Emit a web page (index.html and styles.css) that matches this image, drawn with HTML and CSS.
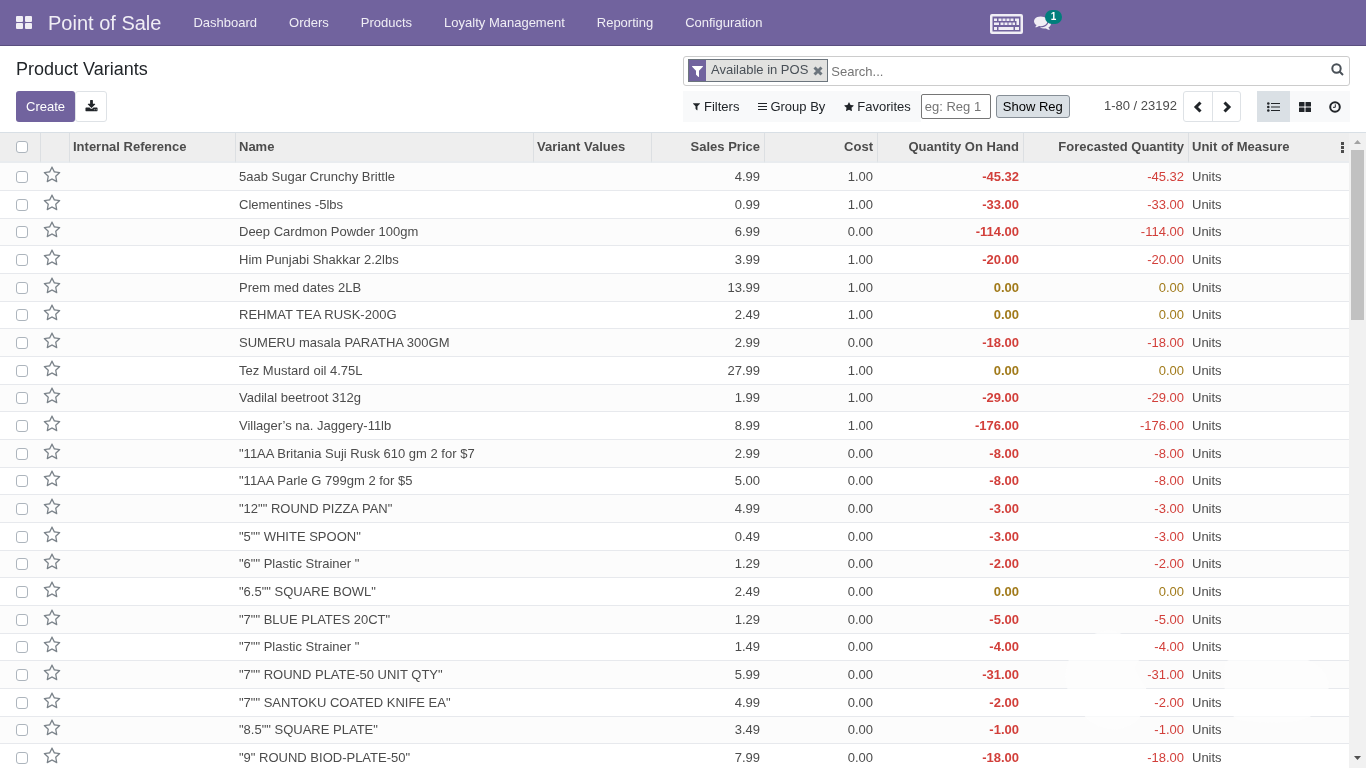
FILE: index.html
```html
<!DOCTYPE html>
<html lang="en">
<head>
    <meta charset="UTF-8">
    <meta name="viewport" content="width=device-width, initial-scale=1.0">
    <title>Product Variants</title>
    <link rel="stylesheet" href="styles.css">
</head>
<body>
    <svg class="sprite" aria-hidden="true">
        <symbol id="star-o" viewBox="0 0 1792 1792"><path d="M1201 1004l306-297-422-62-189-382-189 382-422 62 306 297-73 421 378-199 377 199zm527-357q0 22-26 48l-363 354 86 500q1 7 1 20 0 50-41 50-19 0-40-12l-449-236-449 236q-22 12-40 12-21 0-31.500-14.500t-10.500-35.500q0-6 2-20l86-500-364-354q-25-27-25-48 0-37 56-46l502-73 225-455q19-41 49-41t49 41l225 455 502 73q56 9 56 46z"/></symbol>
        <symbol id="filter" viewBox="0 0 1792 1792"><path d="M1595 295q17 41-14 70l-493 493v742q0 42-39 59-13 5-25 5-27 0-45-19l-256-256q-19-19-19-45v-486l-493-493q-31-29-14-70 17-39 59-39h1280q42 0 59 39z"/></symbol>
    </svg>

    <header class="navbar">
        <button class="apps" aria-label="Apps">
            <svg width="16" height="13" viewBox="0 0 16 13"><rect width="7" height="6" rx="1"/><rect x="9" width="7" height="6" rx="1"/><rect y="7" width="7" height="6" rx="1"/><rect x="9" y="7" width="7" height="6" rx="1"/></svg>
        </button>
        <a href="#" class="brand">Point of Sale</a>
        <nav class="menu">
            <a href="#">Dashboard</a>
            <a href="#">Orders</a>
            <a href="#">Products</a>
            <a href="#">Loyalty Management</a>
            <a href="#">Reporting</a>
            <a href="#">Configuration</a>
        </nav>
        <div class="systray">
            <button aria-label="Keyboard">
                <svg width="33" height="20" viewBox="0 0 33 20"><path fill-rule="evenodd" d="M2 0h29a2 2 0 0 1 2 2v16a2 2 0 0 1-2 2H2a2 2 0 0 1-2-2V2a2 2 0 0 1 2-2zM2.500 2.500v15h28v-15z"/><path d="M4 4.500h3v2.500H4zM8.500 4.500h3v2.500h-3zM12.500 4.500h3v2.500h-3zM16.500 4.500h3v2.500h-3zM20.500 4.500h3v2.500h-3zM25 4.500h4v2.500h-4zM4 8.500h5v2.500H4zM10.500 8.500h3v2.500h-3zM14.500 8.500h3v2.500h-3zM18.500 8.500h3v2.500h-3zM22.500 8.500h2.500v2.500h-2.500zM26.500 6.500h2.500v4.500h-2.500zM4 13h3v3H4zM8.500 13h15v3h-15zM25 13h4v3h-4z"/></svg>
            </button>
            <button class="messages" aria-label="Messages">
                <svg width="17" height="17" viewBox="0 0 1792 1792"><path d="M1408 768q0 139-94 257t-256.500 186.500-353.500 68.500q-86 0-176-16-124 88-278 128-36 9-86 16h-3q-11 0-20.500-8t-11.500-21q-1-3-1-6.500t.5-6.500 2-6l2.500-5 3.500-5.500 4-5 4.500-5 4-4.500q5-6 23-25t26-29.500 22.500-29 25-38.500 20.500-44q-124-72-195-177t-71-224q0-139 94-257t256.500-186.500 353.500-68.500 353.500 68.500 256.500 186.500 94 257zm384 256q0 120-71 224.500t-195 176.500q10 24 20.500 44t25 38.500 22.500 29 26 29.500 23 25q1 1 4 4.500t4.500 5 4 5 3.500 5.500l2.500 5 2 6 .5 6.500-1 6.500q-3 14-13 22t-22 7q-50-7-86-16-154-40-278-128-90 16-176 16-271 0-472-132 58 4 88 4 161 0 309-45t264-129q125-92 192-212t67-254q0-77-23-152 129 71 204 178t75 230z"/></svg>
                <span class="badge">1</span>
            </button>
        </div>
    </header>

    <section class="control-panel">
        <div class="panel-left">
            <h1>Product Variants</h1>
            <div class="actions">
                <button class="btn-create">Create</button>
                <button class="btn-export" aria-label="Export">
                    <svg width="13" height="13" viewBox="0 0 1792 1792"><path d="M1344 1344q0-26-19-45t-45-19-45 19-19 45 19 45 45 19 45-19 19-45zm256 0q0-26-19-45t-45-19-45 19-19 45 19 45 45 19 45-19 19-45zm128-224v320q0 40-28 68t-68 28h-1472q-40 0-68-28t-28-68v-320q0-40 28-68t68-28h465l135 136q58 56 136 56t136-56l136-136h464q40 0 68 28t28 68zm-325-569q17 41-14 70l-448 448q-18 19-45 19t-45-19l-448-448q-31-29-14-70 17-39 59-39h256v-448q0-26 19-45t45-19h256q26 0 45 19t19 45v448h256q42 0 59 39z"/></svg>
                </button>
            </div>
        </div>
        <div class="panel-right">
            <div class="searchbar">
                <div class="facet">
                    <span class="facet-icon"><svg width="15" height="14"><use href="#filter"/></svg></span>
                    <span class="facet-label">Available in POS</span>
                    <button class="facet-remove" aria-label="Remove">
                        <svg width="10" height="10" viewBox="0 0 10 10"><path d="M1.500 1.500l7 7M8.500 1.500l-7 7"/></svg>
                    </button>
                </div>
                <input type="text" class="search-input" placeholder="Search..." aria-label="Search">
                <button class="search-btn" aria-label="Search">
                    <svg width="13" height="13" viewBox="0 0 13 13"><circle cx="5.500" cy="5.500" r="4.200"/><path d="M8.500 8.500l3.500 3.500"/></svg>
                </button>
            </div>
            <div class="search-options">
                <div class="dropdowns">
                    <button><svg width="9" height="9"><use href="#filter"/></svg>Filters</button>
                    <button><svg width="9" height="9" viewBox="0 0 9 9"><path d="M0 1h9v1H0zM0 4h9v1H0zM0 7h9v1H0z"/></svg>Group By</button>
                    <button><svg width="10" height="10" viewBox="0 0 1792 1792"><path d="M1728 647q0 22-26 48l-363 354 86 500q1 7 1 20 0 21-10.500 35.500t-30.500 14.500q-19 0-40-12l-449-236-449 236q-22 12-40 12-21 0-31.500-14.500t-10.500-35.500q0-6 2-20l86-500-364-354q-25-27-25-48 0-37 56-46l502-73 225-455q19-41 49-41t49 41l225 455 502 73q56 9 56 46z"/></svg>Favorites</button>
                </div>
                <input type="text" class="reg-input" placeholder="eg: Reg 1" aria-label="Register">
                <button class="reg-btn">Show Reg</button>
                <span class="pager-count">1-80 / 23192</span>
                <div class="pager">
                    <button aria-label="Previous"><svg width="12" height="12" viewBox="0 0 12 12"><path d="M8.500 1.500L4 6l4.500 4.500"/></svg></button>
                    <button aria-label="Next"><svg width="12" height="12" viewBox="0 0 12 12"><path d="M3.500 1.500L8 6l-4.500 4.500"/></svg></button>
                </div>
                <div class="views">
                    <button class="active" aria-label="List view"><svg width="13" height="10" viewBox="0 0 13 10"><circle cx="1.300" cy="1.500" r="1.300"/><circle cx="1.300" cy="5" r="1.300"/><circle cx="1.300" cy="8.500" r="1.300"/><path d="M4 1h9v1H4zM4 4.500h9v1H4zM4 8h9v1H4z"/></svg></button>
                    <button aria-label="Kanban view"><svg width="12" height="10" viewBox="0 0 12 10"><rect width="5.500" height="4.500" rx=".5"/><rect x="6.500" width="5.500" height="4.500" rx=".5"/><rect y="5.500" width="5.500" height="4.500" rx=".5"/><rect x="6.500" y="5.500" width="5.500" height="4.500" rx=".5"/></svg></button>
                    <button aria-label="Activity view"><svg class="clock" width="12" height="12" viewBox="0 0 12 12"><circle cx="6" cy="6" r="4.800"/><path d="M6.300 3.300v3H4"/></svg></button>
                </div>
            </div>
        </div>
    </section>

    <main class="content">
        <div class="list">
            <table>
                <colgroup>
                    <col class="col-check">
                    <col class="col-star">
                    <col class="col-ref">
                    <col>
                    <col class="col-variant">
                    <col class="col-price">
                    <col class="col-price">
                    <col class="col-onhand">
                    <col class="col-forecast">
                    <col class="col-unit">
                </colgroup>
                <thead>
                    <tr>
                        <th class="check"><input type="checkbox" aria-label="Select all"></th>
                        <th></th>
                        <th>Internal Reference</th>
                        <th>Name</th>
                        <th>Variant Values</th>
                        <th class="num">Sales Price</th>
                        <th class="num">Cost</th>
                        <th class="num">Quantity On Hand</th>
                        <th class="num">Forecasted Quantity</th>
                        <th>
                            <div class="last-head">
                                Unit of Measure
                                <button aria-label="Optional columns"><svg width="3" height="11" viewBox="0 0 3 11"><path d="M0 0h3v3H0zM0 4h3v3H0zM0 8h3v3H0z"/></svg></button>
                            </div>
                        </th>
                    </tr>
                </thead>
                <tbody id="rows"></tbody>
            </table>
            <!-- faint white shapes over the last rows -->
            <svg class="shapes" width="266" height="100" viewBox="0 0 266 100" aria-hidden="true"><path d="M44 0Q64 2 76 26L70 38Q76 50 82 60Q82 96 50 100Q24 98 16 80Q0 62 0 46Q4 6 44 0z"/><path d="M160 32Q184 18 208 24Q262 26 264 56Q260 88 228 92Q196 94 172 90Q156 76 160 32z"/></svg>
        </div>
        <div class="scrollbar" aria-hidden="true">
            <svg width="9" height="5" viewBox="0 0 9 5"><path d="M4.500 0L8 4H1z"/></svg>
            <div class="thumb"></div>
            <svg class="down" width="9" height="5" viewBox="0 0 9 5"><path d="M1 0h7L4.500 4z"/></svg>
        </div>
    </main>

    <script>
        // name, sales price, cost, quantity
        const products = [
            ['5aab Sugar Crunchy Brittle', '4.99', '1.00', '-45.32'],
            ['Clementines -5lbs', '0.99', '1.00', '-33.00'],
            ['Deep Cardmon Powder 100gm', '6.99', '0.00', '-114.00'],
            ['Him Punjabi Shakkar 2.2lbs', '3.99', '1.00', '-20.00'],
            ['Prem med dates 2LB', '13.99', '1.00', '0.00'],
            ['REHMAT TEA RUSK-200G', '2.49', '1.00', '0.00'],
            ['SUMERU masala PARATHA 300GM', '2.99', '0.00', '-18.00'],
            ['Tez Mustard oil 4.75L', '27.99', '1.00', '0.00'],
            ['Vadilal beetroot 312g', '1.99', '1.00', '-29.00'],
            ['Villager’s na. Jaggery-11lb', '8.99', '1.00', '-176.00'],
            ['"11AA Britania Suji Rusk 610 gm 2 for $7', '2.99', '0.00', '-8.00'],
            ['"11AA Parle G 799gm 2 for $5', '5.00', '0.00', '-8.00'],
            ['"12"" ROUND PIZZA PAN"', '4.99', '0.00', '-3.00'],
            ['"5"" WHITE SPOON"', '0.49', '0.00', '-3.00'],
            ['"6"" Plastic Strainer "', '1.29', '0.00', '-2.00'],
            ['"6.5"" SQUARE BOWL"', '2.49', '0.00', '0.00'],
            ['"7"" BLUE PLATES 20CT"', '1.29', '0.00', '-5.00'],
            ['"7"" Plastic Strainer "', '1.49', '0.00', '-4.00'],
            ['"7"" ROUND PLATE-50 UNIT QTY"', '5.99', '0.00', '-31.00'],
            ['"7"" SANTOKU COATED KNIFE EA"', '4.99', '0.00', '-2.00'],
            ['"8.5"" SQUARE PLATE"', '3.49', '0.00', '-1.00'],
            ['"9" ROUND BIOD-PLATE-50"', '7.99', '0.00', '-18.00']
        ];

        const rows = document.getElementById('rows');

        products.forEach(([name, price, cost, qty]) => {
            const color = Number(qty) < 0 ? 'danger' : 'warning';
            const tr = document.createElement('tr');
            tr.innerHTML = `
                <td class="check"><input type="checkbox" aria-label="Select row"></td>
                <td class="star"><button aria-label="Favorite"><svg width="18" height="18"><use href="#star-o"/></svg></button></td>
                <td></td>
                <td>${name}</td>
                <td></td>
                <td class="num">${price}</td>
                <td class="num">${cost}</td>
                <td class="num bold ${color}">${qty}</td>
                <td class="num ${color}">${qty}</td>
                <td>Units</td>`;
            rows.appendChild(tr);
        });
    </script>
</body>
</html>
```
FILE: styles.css
```css
* {
    box-sizing: border-box;
}
body {
    margin: 0;
    height: 100vh;
    overflow: hidden;
    display: flex;
    flex-direction: column;
    font-family: "Liberation Sans", Arial, sans-serif;
    font-size: 13px;
    line-height: 20px;
    color: #4c4c4c;
    background-color: #fff;
}
button, input {
    font-family: inherit;
    font-size: 13px;
    margin: 0;
}
button {
    display: flex;
    align-items: center;
    justify-content: center;
    padding: 0;
    border: none;
    background: none;
    color: #212529;
    cursor: pointer;
}
a {
    color: inherit;
    text-decoration: none;
}
svg {
    display: block;
    fill: currentColor;
}
.sprite {
    position: absolute;
    width: 0;
    height: 0;
}

/* navbar */
.navbar {
    flex: none;
    display: flex;
    align-items: center;
    height: 46px;
    padding: 0 304px 0 16px;
    background-color: #71639e;
    border-bottom: 1px solid #5a4f7f;
    color: #f0eef5;
}
.navbar button {
    color: #f0eef5;
}
.brand {
    margin-left: 16px;
    font-size: 20px;
}
.menu {
    display: flex;
    gap: 32px;
    margin-left: 32px;
}
.systray {
    display: flex;
    align-items: center;
    gap: 11px;
    margin-left: auto;
    padding-top: 2px;
}
.messages {
    position: relative;
    width: 28px;
    justify-content: flex-start;
}
.messages svg {
    margin-bottom: 2px;
}
.badge {
    position: absolute;
    top: -4px;
    right: 0;
    width: 17px;
    height: 14px;
    border-radius: 7px;
    background-color: #017e7c;
    color: #fff;
    font-size: 10px;
    font-weight: bold;
    line-height: 14px;
}

/* control panel */
.control-panel {
    flex: none;
    display: grid;
    grid-template-columns: 1fr 1fr;
    padding: 10px 16px;
}
.panel-left, .panel-right {
    display: flex;
    flex-direction: column;
    justify-content: space-between;
    gap: 5px;
}
h1 {
    margin: 0;
    padding-top: 2px;
    font-size: 18px;
    font-weight: normal;
    line-height: 22px;
    color: #212529;
}
.actions {
    display: flex;
}
.btn-create {
    height: 31px;
    padding: 0 10px;
    border-radius: 3px;
    background-color: #71639e;
    color: #fff;
}
.btn-export {
    width: 32px;
    height: 31px;
    border: 1px solid #dee2e6;
    border-radius: 3px;
}
.searchbar {
    display: flex;
    align-items: center;
    height: 30px;
    padding: 0 5px 0 4px;
    border: 1px solid #ccc;
    border-radius: 3px;
}
.facet {
    display: flex;
    height: 23px;
    margin-bottom: 1px;
    border: 1px solid #6c757d;
    background-color: #e2e2e0;
}
.facet-icon {
    display: flex;
    align-items: center;
    width: 17px;
    padding-left: 1px;
    background-color: #71639e;
    color: #fff;
}
.facet-label {
    padding: 0 4px 0 5px;
    line-height: 19px;
    color: #495057;
}
.facet-remove {
    width: 15px;
    padding-right: 4px;
}
.facet-remove svg {
    stroke: #6c757d;
    stroke-width: 3;
}
.search-input {
    flex: 1;
    height: 24px;
    padding: 0 3px;
    border: none;
    outline: none;
}
.search-input::placeholder, .reg-input::placeholder {
    color: #757575;
}
.search-btn {
    padding-bottom: 3px;
}
.search-btn svg {
    fill: none;
    stroke: #495057;
    stroke-width: 2;
}
.search-options {
    display: flex;
    align-items: center;
    height: 31px;
}
.dropdowns {
    display: flex;
    gap: 19px;
    height: 31px;
    padding: 0 10px 0 9px;
    background-color: #f8f9fa;
}
.dropdowns button {
    gap: 3px;
}
.reg-input {
    width: 70px;
    height: 25px;
    padding: 0 3px;
    border: 1px solid #767676;
    border-radius: 2px;
}
.reg-btn {
    width: 74px;
    height: 23px;
    margin-left: 5px;
    border: 1px solid #868e96;
    border-radius: 3px;
    background-color: #dae0e5;
    color: #000;
}
.pager-count {
    margin-left: auto;
    padding-bottom: 2px;
    color: #4c4c4c;
}
.pager {
    display: flex;
    height: 31px;
    margin-left: 6px;
    border: 1px solid #dee2e6;
    border-radius: 3px;
}
.pager button {
    width: 28px;
}
.pager button + button {
    border-left: 1px solid #dee2e6;
}
.pager svg {
    fill: none;
    stroke: #212529;
    stroke-width: 3;
}
.views {
    display: flex;
    height: 31px;
    margin-left: 16px;
    background-color: #f8f9fa;
}
.views button {
    width: 30px;
}
.views .active {
    width: 33px;
    background-color: #dae0e5;
}
.clock {
    fill: none;
    stroke: #212529;
    stroke-width: 2;
}
.clock path {
    stroke-width: 1;
}

/* product list */
.content {
    flex: 1;
    display: flex;
    min-height: 0;
    border-top: 1px solid #d8dfe5;
}
.list {
    position: relative;
    flex: 1;
    overflow: hidden;
}
table {
    width: 100%;
    table-layout: fixed;
    border-collapse: separate;
    border-spacing: 0;
}
.col-check {
    width: 41px;
}
.col-star {
    width: 29px;
}
.col-ref {
    width: 166px;
}
.col-variant {
    width: 118px;
}
.col-price {
    width: 113px;
}
.col-onhand {
    width: 146px;
}
.col-forecast {
    width: 165px;
}
.col-unit {
    width: 160px;
}
th, td {
    padding: 0 3px;
    text-align: left;
    white-space: nowrap;
}
th {
    height: 30px;
    background-color: #eee;
    background-clip: padding-box;
    border-right: 1px solid #dcdfe2;
    border-bottom: 2px solid #e9ecef;
}
th:last-child {
    border-right: none;
}
td {
    height: 28px;
    border-bottom: 1px solid #e7e9ed;
}
tr:nth-child(3n) td {
    height: 27px;
}
tbody tr:nth-child(odd) {
    background-color: #fcfcfc;
}
.num {
    padding-right: 4px;
    text-align: right;
}
td.num {
    padding-right: 5px;
}
.check {
    padding: 0 0 0 16px;
}
.check input {
    display: block;
    appearance: none;
    width: 12px;
    height: 12px;
    border: 1px solid #adb5bd;
    border-radius: 3px;
    background-color: #fff;
}
.star {
    padding: 0 0 4px 2px;
}
.star button {
    color: #7b838a;
}
.bold {
    font-weight: bold;
}
.danger {
    color: #d23f3a;
}
.warning {
    color: #a17a1a;
}
.last-head {
    display: flex;
    justify-content: space-between;
    padding-right: 2px;
}
.last-head button {
    color: #4c4c4c;
}
.shapes {
    position: absolute;
    right: 18px;
    bottom: 38px;
    fill: #fdfdfd;
    mix-blend-mode: lighten;
    opacity: 0.8;
    pointer-events: none;
}
.scrollbar {
    flex: none;
    display: flex;
    flex-direction: column;
    align-items: center;
    width: 17px;
    padding: 7px 0;
    background-color: #f1f1f1;
    color: #a3a3a3;
}
.thumb {
    width: 13px;
    height: 170px;
    margin-top: 5px;
    background-color: #c1c1c1;
}
.down {
    margin-top: auto;
    color: #505050;
}
```
